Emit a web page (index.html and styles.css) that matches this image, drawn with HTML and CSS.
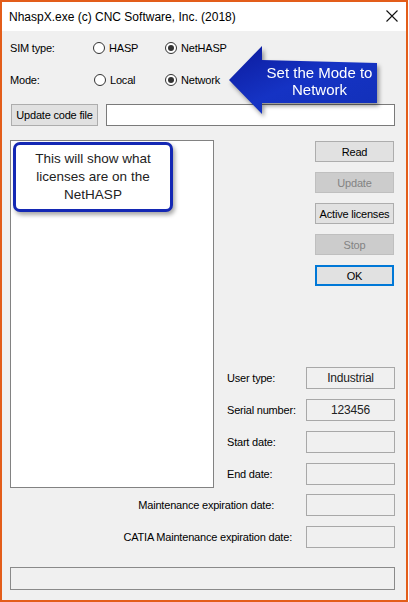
FILE: index.html
```html
<!DOCTYPE html>
<html lang="en">
<head>
  <meta charset="UTF-8" />
  <title>NhaspX</title>
  <link rel="stylesheet" href="styles.css">
</head>
<body>

<div class="window">
  <div class="titlebar">
    <span class="title">NhaspX.exe (c) CNC Software, Inc. (2018)</span>
    <svg class="close" width="12" height="12" viewBox="0 0 12 12">
      <path d="M0.5 0.5 L11.5 11.5 M11.5 0.5 L0.5 11.5" stroke="#111" stroke-width="1.1" fill="none" />
    </svg>
  </div>

  <div class="content">
    <div class="option-row sim-row">
      <span class="row-label">SIM type:</span>
      <span class="option"><span class="radio"></span>HASP</span>
      <span class="option"><span class="radio checked"></span>NetHASP</span>
    </div>
    <div class="option-row mode-row">
      <span class="row-label">Mode:</span>
      <span class="option local"><span class="radio"></span>Local</span>
      <span class="option"><span class="radio checked"></span>Network</span>
    </div>

    <div class="update-row">
      <button class="btn update-code">Update code file</button>
      <div class="text-box"></div>
    </div>

    <div class="main">
      <div class="list-box"></div>
      <div class="side">
        <div class="buttons">
          <button class="btn side-btn">Read</button>
          <button class="btn side-btn disabled">Update</button>
          <button class="btn side-btn">Active licenses</button>
          <button class="btn side-btn disabled">Stop</button>
          <button class="btn side-btn default">OK</button>
        </div>
        <div class="info">
          <div class="info-row"><span class="info-label">User type:</span><div class="field">Industrial</div></div>
          <div class="info-row"><span class="info-label">Serial number:</span><div class="field">123456</div></div>
          <div class="info-row"><span class="info-label">Start date:</span><div class="field"></div></div>
          <div class="info-row"><span class="info-label">End date:</span><div class="field"></div></div>
        </div>
      </div>
    </div>

    <div class="wide-row first">
      <span class="maint-label">Maintenance expiration date:</span>
      <div class="field"></div>
    </div>
    <div class="wide-row">
      <span class="catia-label">CATIA Maintenance expiration date:</span>
      <div class="field"></div>
    </div>

    <div class="status-bar"></div>
  </div>

  <!-- annotations drawn over the dialog -->
  <div class="callout">This will show what licenses are on the NetHASP</div>

  <div class="arrow">
    <svg width="160" height="80" viewBox="0 0 160 80">
      <defs>
        <linearGradient id="arrowFill" x1="0" y1="0" x2="1" y2="1">
          <stop offset="0" stop-color="#0c1a9c" />
          <stop offset="0.5" stop-color="#1533c4" />
          <stop offset="1" stop-color="#1230b8" />
        </linearGradient>
      </defs>
      <polygon points="4,39 37,5 37,19 152,22 152,62 37,62 37,73" fill="url(#arrowFill)" />
    </svg>
    <div class="arrow-text">Set the Mode to<br>Network</div>
  </div>
</div>

</body>
</html>
```

FILE: styles.css
```css
body {
  margin: 0;
  padding: 0;
  background: #fff;
  font-family: "Liberation Sans", Arial, sans-serif;
  font-size: 11px;
  letter-spacing: -0.2px;
  color: #000;
}

.window {
  position: relative;
  width: 408px;
  height: 602px;
  box-sizing: border-box;
  border: 2px solid #e35d1a;
  background: #f0f0f0;
  display: flex;
  flex-direction: column;
}

.titlebar {
  height: 29px;
  background: #fff;
  display: flex;
  align-items: center;
  justify-content: space-between;
  padding: 0 8px 0 7px;
}

.title {
  font-size: 12px;
  letter-spacing: 0;
  color: #000;
}

.close {
  margin-top: -2px;
}

.content {
  padding: 0 11px 0 8px;
  display: flex;
  flex-direction: column;
}

.option-row {
  height: 14px;
  display: flex;
  align-items: center;
}

.sim-row {
  margin-top: 10px;
}

.mode-row {
  margin-top: 18px;
}

.row-label {
  width: 83px;
}

.option {
  display: flex;
  align-items: center;
  width: 72px;
}

.option.local {
  margin-left: 1px;
  width: 71px;
}

.radio {
  position: relative;
  width: 12px;
  height: 12px;
  box-sizing: border-box;
  border: 1px solid #333;
  border-radius: 50%;
  background: #fff;
  margin-right: 4px;
}

.radio.checked::after {
  content: "";
  position: absolute;
  left: 2px;
  top: 2px;
  width: 6px;
  height: 6px;
  border-radius: 50%;
  background: #333;
}

.update-row {
  margin-top: 17px;
  height: 22px;
  display: flex;
  gap: 8px;
}

.btn {
  font-family: "Liberation Sans", Arial, sans-serif;
  font-size: 11px;
  letter-spacing: -0.2px;
  color: #000;
  background: #e1e1e1;
  border: 1px solid #adadad;
  padding: 0;
  box-sizing: border-box;
}

.update-code {
  width: 87px;
  height: 22px;
  margin-left: 1px;
}

.text-box {
  flex: 1;
  box-sizing: border-box;
  border: 1px solid #7a7a7a;
  background: #fff;
}

.main {
  margin-top: 14px;
  height: 348px;
  display: grid;
  grid-template-columns: 204px 1fr;
}

.list-box {
  box-sizing: border-box;
  border: 1px solid #828282;
  background: #fff;
}

.side {
  display: flex;
  flex-direction: column;
  justify-content: space-between;
  padding-bottom: 3px;
}

.buttons {
  display: flex;
  flex-direction: column;
  align-items: flex-end;
  gap: 10px;
  margin-top: 1px;
  margin-right: 1px;
}

.side-btn {
  width: 79px;
  height: 21px;
}

.side-btn.disabled {
  background: #cccccc;
  border-color: #bfbfbf;
  color: #838383;
}

.side-btn.default {
  border: 2px solid #0078d7;
}

.info {
  display: flex;
  flex-direction: column;
  gap: 10px;
}

.info-row {
  height: 22px;
  display: flex;
  align-items: center;
  justify-content: space-between;
  padding-left: 13px;
}

.field {
  width: 89px;
  height: 22px;
  box-sizing: border-box;
  border: 1px solid #a8a8a8;
  background: #f0f0f0;
  display: flex;
  align-items: center;
  justify-content: center;
  font-size: 12px;
  color: #222;
}

.wide-row {
  height: 22px;
  margin-top: 10px;
  display: flex;
  align-items: center;
  justify-content: flex-end;
}

.wide-row.first {
  margin-top: 6px;
}

.maint-label {
  margin-right: 32px;
}

.catia-label {
  margin-right: 14px;
}

.status-bar {
  margin-top: 19px;
  height: 23px;
  box-sizing: border-box;
  border: 1px solid #8a8a8a;
  background: #f0f0f0;
}

.callout {
  position: absolute;
  left: 11px;
  top: 140px;
  width: 160px;
  height: 70px;
  box-sizing: border-box;
  border: 3px solid #1428b4;
  border-radius: 7px;
  background: #fff;
  box-shadow: 2px 3px 4px rgba(0, 0, 0, 0.35);
  padding: 5px 6px 0;
  text-align: center;
  font-size: 13.5px;
  letter-spacing: 0;
  line-height: 18px;
  color: #222;
}

.arrow {
  position: absolute;
  left: 223px;
  top: 39px;
  width: 160px;
  height: 80px;
  filter: drop-shadow(2px 3px 2px rgba(0, 0, 0, 0.4));
}

.arrow svg {
  display: block;
}

.arrow-text {
  position: absolute;
  left: 37px;
  top: 23px;
  width: 115px;
  text-align: center;
  color: #fff;
  font-size: 15px;
  letter-spacing: 0;
  line-height: 17px;
}
```
